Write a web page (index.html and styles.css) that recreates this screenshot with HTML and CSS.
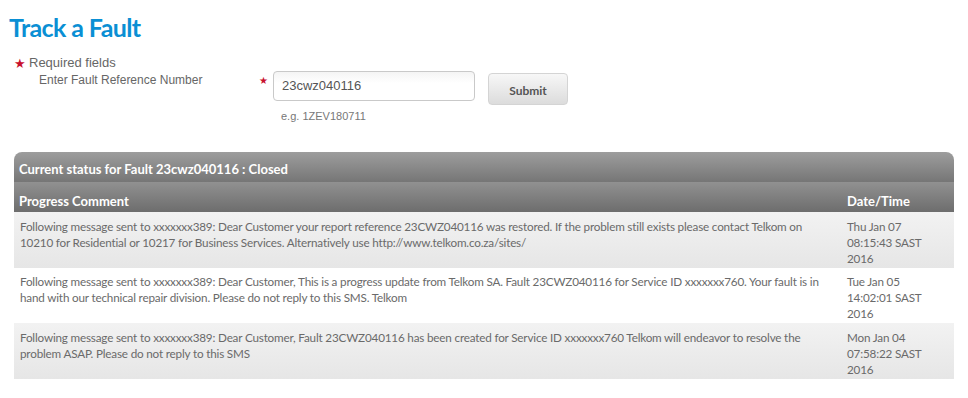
FILE: index.html
```html
<!DOCTYPE html>
<html lang="en">
<head>
<meta charset="utf-8">
<title>Track a Fault</title>
<link rel="stylesheet" href="styles.css">
</head>
<body>
<h1 class="title">Track a Fault</h1>
<div class="form">
  <div class="legend">
    <div class="req"><span class="star big">&#9733;</span>Required fields</div>
    <div class="label">Enter Fault Reference Number</div>
  </div>
  <div class="field">
    <div class="field-row">
      <span class="star small">&#9733;</span>
      <div class="input">23cwz040116</div>
      <button class="submit" type="button">Submit</button>
    </div>
    <div class="hint">e.g. 1ZEV180711</div>
  </div>
</div>

<div class="panel">
  <div class="panel-head">Current status for Fault 23cwz040116 : Closed</div>
  <table class="grid">
    <thead>
      <tr><th class="c-comment">Progress Comment</th><th class="c-date">Date/Time</th></tr>
    </thead>
    <tbody>
      <tr class="shade">
        <td>Following message sent to xxxxxxx389: Dear Customer your report reference 23CWZ040116 was restored. If the problem still exists please contact Telkom on 10210 for Residential or 10217 for Business Services. Alternatively use http://www.telkom.co.za/sites/</td>
        <td>Thu Jan 07<br>08:15:43 SAST<br>2016</td>
      </tr>
      <tr class="plain">
        <td>Following message sent to xxxxxxx389: Dear Customer, This is a progress update from Telkom SA. Fault 23CWZ040116 for Service ID xxxxxxx760. Your fault is in hand with our technical repair division. Please do not reply to this SMS. Telkom</td>
        <td>Tue Jan 05<br>14:02:01 SAST<br>2016</td>
      </tr>
      <tr class="shade">
        <td>Following message sent to xxxxxxx389: Dear Customer, Fault 23CWZ040116 has been created for Service ID xxxxxxx760 Telkom will endeavor to resolve the problem ASAP. Please do not reply to this SMS</td>
        <td>Mon Jan 04<br>07:58:22 SAST<br>2016</td>
      </tr>
    </tbody>
  </table>
</div>
</body>
</html>
```

FILE: styles.css
```css
* { box-sizing: border-box; }
html, body { margin: 0; padding: 0; background: #fff; }
body { font-family: "Liberation Sans", Arial, sans-serif; color: #666; }

.title {
  margin: 0;
  padding: 12px 0 0 9px;
  font-family: "Lato", "Open Sans", sans-serif;
  font-weight: 700;
  font-size: 25px;
  line-height: 30px;
  color: #0a8fd4;
  letter-spacing: -0.6px;
}

.form {
  display: flex;
  padding: 13px 0 0 14px;
}
.legend { width: 246px; }
.req {
  font-size: 13px;
  line-height: 16px;
  color: #666;
  display: flex;
  align-items: center;
}
.star { color: #c8102e; line-height: 1; }
.star.big { font-size: 13px; width: 15px; }
.label {
  font-size: 12px;
  line-height: 16px;
  padding-left: 25px;
  margin-top: 1px;
  color: #666;
}

.field { padding-top: 16px; }
.field-row { display: flex; align-items: flex-start; }
.star.small { font-size: 10px; width: 14px; padding-top: 5px; margin-left: -1px; }
.input {
  width: 202px;
  height: 30px;
  border: 1px solid #c9c9c9;
  border-radius: 4px;
  background: linear-gradient(#f4f4f4, #fff 40%);
  padding: 0 8px;
  font-size: 13px;
  line-height: 28px;
  color: #555;
}
.submit {
  margin: 2px 0 0 13px;
  width: 80px;
  height: 32px;
  border: 1px solid #d4d4d4;
  border-radius: 4px;
  background: linear-gradient(#f7f7f7, #dcdcdc);
  font-family: "Lato", "Open Sans", sans-serif;
  font-weight: 700;
  font-size: 12px;
  color: #555;
  padding: 2px 0 0;
}
.hint {
  font-size: 11px;
  color: #777;
  padding: 4px 0 0 21px;
  line-height: 14px;
}

.panel {
  margin: 29px 0 0 14px;
  width: 940px;
  border-radius: 8px 8px 0 0;
  overflow: hidden;
  font-family: "Lato", "Open Sans", sans-serif;
}
.panel-head {
  height: 30px;
  background: linear-gradient(#9d9d9d, #767676);
  color: #fff;
  font-weight: 700;
  font-size: 13px;
  line-height: 34px;
  padding-left: 5px;
}
.grid { width: 100%; border-collapse: collapse; }
.grid th {
  height: 30px;
  background: linear-gradient(#919191, #6d6d6d);
  color: #fff;
  font-weight: 700;
  font-size: 13px;
  text-align: left;
  padding: 7px 5px 0;
  vertical-align: middle;
}
.grid th.c-date { width: 113px; padding-left: 6px; }
.grid td {
  font-size: 11.7px;
  letter-spacing: -0.18px;
  line-height: 16px;
  color: #6a6a6a;
  padding: 5.5px 6px 2px;
  vertical-align: top;
}
.grid td + td { padding-left: 6px; }
.shade td { background: linear-gradient(#f2f2f2, #e6e6e6); }
.plain td { background: #fff; }
```
